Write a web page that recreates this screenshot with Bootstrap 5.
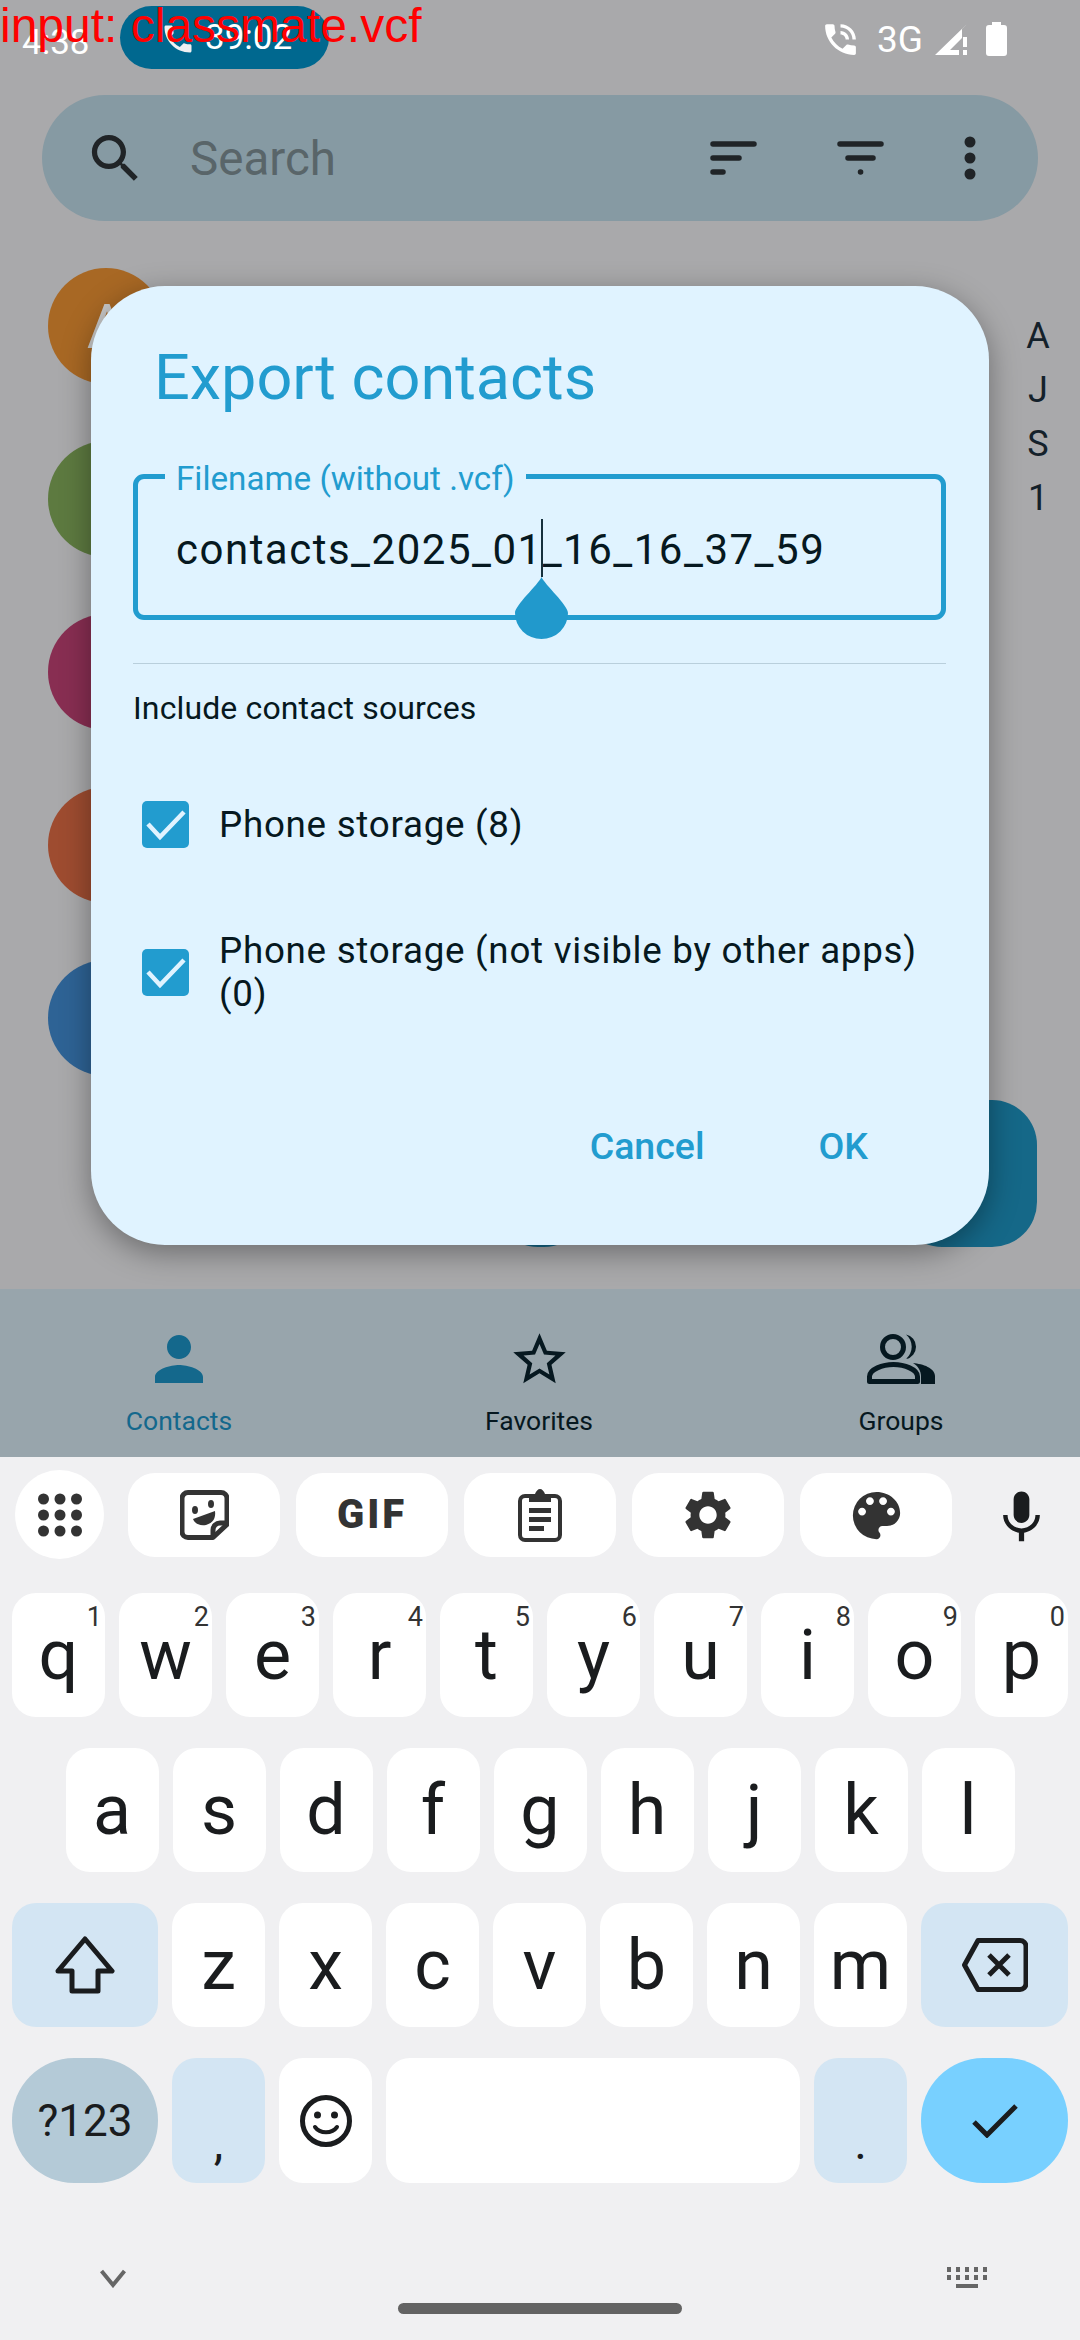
<!DOCTYPE html>
<html lang="en">
<head>
  <meta charset="UTF-8" />
  <meta name="viewport" content="width=device-width, initial-scale=1.0" />
  <title>Export contacts</title>
  <link href="https://cdn.jsdelivr.net/npm/bootstrap@5.3.3/dist/css/bootstrap.min.css" rel="stylesheet">
  <style>
    body {
      margin: 0;
      width: 1080px;
      height: 2340px;
      overflow: hidden;
      font-family: Roboto, "Noto Sans", sans-serif;
      background: #f0f0f2;
    }
    svg { display: block; flex: none; }

    .phone { width: 1080px; height: 2340px; position: relative; }
    .app-area { height: 1457px; background: #a9a9ab; }

    .debug-line {
      position: absolute; left: 0; top: 2px; z-index: 10;
      font: 48px/48px "Liberation Sans", sans-serif; color: #ff0000;
    }
    .status-row { height: 78px; color: #fff; font-size: 35px; padding-left: 22px; }
    .call-pill {
      width: 209px; height: 63px; margin: 6px 0 0 30px; padding: 2px 0 0 40px; gap: 9px;
      background: #00688f; border-radius: 32px;
    }
    .status-time { width: 68px; height: 78px; margin-top: 4px; }
    .status-icons { height: 78px; margin-left: auto; padding-right: 73px; }
    .net-label { font-size: 37px; line-height: 37px; margin: 0 12px 0 16px; }
    .battery-icon { margin-left: 19px; }

    .search-pill {
      height: 126px; margin: 17px 42px 0; background: #869aa3; border-radius: 63px;
      padding-left: 42px; color: #202427;
    }
    .search-text { font-size: 47.5px; line-height: 60px; padding-top: 2px; color: #596569; margin-left: 43px; }
    .search-tools { margin-left: auto; padding-right: 62px; gap: 80px; }

    .contact-area { height: 1068px; }
    .avatar-col { padding: 47px 0 0 48px; gap: 57px; }
    .avatar-dot { width: 116px; height: 116px; color: #c9c9c9; font-size: 62px; padding-left: 2px; }
    .dot-orange { background: #a86824; }
    .dot-green { background: #5d7a40; }
    .dot-plum { background: #882e52; }
    .dot-rust { background: #9e4c30; }
    .dot-blue { background: #2e6395; }
    .index-col { width: 44px; margin-right: 20px; padding-top: 88px; font-size: 36px; line-height: 54px; color: #14212a; }
    .fab-wide { position: absolute; right: 43px; top: 879px; width: 140px; height: 147px; background: #156888; border-radius: 45px; }
    .fab-mid { position: absolute; left: 490px; top: 879px; width: 102px; height: 147px; background: #156888; border-radius: 48px; }

    .bottom-nav { height: 168px; padding-left: 79px; background: #98a5ac; color: #061820; font-size: 26.5px; }
    .nav-cell { width: 200px; height: 168px; }
    .nav-cell + .nav-cell { margin-left: 160px; }
    .nav-cell.nav-last { margin-left: 162px; }
    .nav-slot { height: 114px; }
    .nav-person { margin-top: 34px; }
    .nav-star { margin-top: 39px; }
    .nav-groups { margin-top: 45px; }
    .nav-label { line-height: 36px; }
    .nav-active { color: #14688c; }

    .export-dialog {
      position: absolute; left: 91px; top: 286px; width: 898px; height: 959px; z-index: 5;
      background: #e0f3ff; border: 0; border-radius: 74px;
      padding: 54px 43px 0 42px; color: #061820;
      box-shadow: 0 8px 30px rgba(0, 0, 0, .36);
    }
    .dialog-title { font-size: 63px; line-height: 76px; font-weight: 400; color: #229ccf; margin: 0 0 40px 21px; }
    .name-field { border: 5px solid #229ccf; border-radius: 11px; height: 164px; padding: 0; }
    .name-field legend {
      float: none; width: auto; margin: 0 0 0 27px; padding: 5px 11px 0;
      font-size: 33.2px; line-height: 36px; color: #229ccf;
    }
    .name-input {
      background: transparent; border: 0; padding: 0; margin: 23px 0 0 38px; width: 740px;
      font: 42px/60px Roboto, sans-serif; letter-spacing: 1.5px; color: #061820; outline: 0;
    }
    .text-caret { position: absolute; left: 450px; top: 233px; width: 1.5px; height: 58px; background: #16303c; }
    .text-drop { position: absolute; left: 424px; top: 291px; }
    .field-rule { margin: 43px 0 0; border: 0; border-top: 1.5px solid #b9cfdc; opacity: 1; }
    .sources-label { font-size: 32px; line-height: 44px; letter-spacing: .13px; margin: 22px 0 51px; }
    .source-list { gap: 62px; }
    .source-row { min-height: 86px; margin: 0 0 0 9px; padding: 0; gap: 30px; font-size: 36.75px; line-height: 43px; letter-spacing: .73px; }
    .source-row .form-check-input {
      float: none; flex: none; width: 47px; height: 47px; margin: 0; border: 0; border-radius: 5px;
      background-color: #229ccf; opacity: 1;
    }
    .source-row .form-check-input:checked {
      background-size: 100% 100%;
      background-image: url("data:image/svg+xml,%3csvg xmlns='http://www.w3.org/2000/svg' viewBox='0 0 47 47'%3e%3cpath fill='none' stroke='%23e0f3ff' stroke-width='4.5' d='M6 23l12 13L42 11'/%3e%3c/svg%3e");
    }
    .source-row .form-check-label { opacity: 1; }
    .dialog-actions { margin-top: 109px; padding-right: 78px; gap: 114px; }
    .dialog-btn { padding: 0; border: 0; font-size: 37.5px; line-height: 44px; font-weight: 500; color: #229ccf; text-decoration: none; }

    .keyboard { height: 883px; background: #f0f0f2; }
    .kb-tools { height: 136px; padding: 13px 0 0 15px; color: #333; }
    .apps-round { width: 89px; height: 89px; background: #fff; margin-right: 24px; }
    .tool-key { width: 152px; height: 84px; margin: 3px 16px 0 0; background: #fff; border-radius: 27px; }
    .gif-text { font-size: 40px; line-height: 38px; font-weight: 900; letter-spacing: 3px; color: #333; }
    .mic-slot { margin: 3px 0 0 22px; color: #1a1c1e; }
    .kb-row { height: 124px; margin-bottom: 31px; gap: 14px; }
    .kb-edge { padding: 0 12px; }
    .kb-last { height: 125px; margin-bottom: 0; }
    .kb-key {
      position: relative; width: 93px; height: 100%; padding: 0; border: 0; border-radius: 24px;
      background: #fff; color: #1a1c1e; font-size: 70px; line-height: 1;
    }
    .kb-hint { position: absolute; top: 11px; right: 3px; font-size: 27px; line-height: 27px; color: #333; }
    .kb-wide { width: 146px; }
    .kb-wider { width: 147px; }
    .kb-space { width: 414px; }
    .kb-fn { background: #d3e5f3; }
    .kb-sym { background: #b4cad7; font-size: 44px; border-radius: 62px; }
    .kb-done { background: #78d0ff; border-radius: 62px; }
    .kb-punct { font-size: 48px; padding-top: 44px; }
    .kb-footer { margin-top: 84px; padding: 0 92px 0 100px; height: 21px; color: #666; }
    .home-bar { width: 284px; height: 11px; margin: 15px auto 0; background: #636363; border-radius: 6px; }
  </style>
</head>
<body>
  <div class="phone">
    <div class="debug-line">input: classmate.vcf</div>

    <div class="app-area d-flex flex-column">
      <div class="status-row d-flex align-items-start">
        <div class="status-time d-flex align-items-center">4:38</div>
        <div class="call-pill d-flex align-items-center">
          <svg width="36" height="36" viewBox="0 0 24 24" fill="#f0f0f2"><path d="M6.62 10.79c1.44 2.83 3.76 5.14 6.59 6.59l2.2-2.2c.27-.27.67-.36 1.02-.24 1.12.37 2.33.57 3.57.57.55 0 1 .45 1 1V20c0 .55-.45 1-1 1-9.39 0-17-7.61-17-17 0-.55.45-1 1-1h3.5c.55 0 1 .45 1 1 0 1.25.2 2.45.57 3.57.11.35.03.74-.25 1.02l-2.2 2.2z"/></svg>
          <span>39:02</span>
        </div>
        <div class="status-icons d-flex align-items-center">
          <svg width="41" height="41" viewBox="0 0 24 24" fill="#fff"><path d="M20 15.5c-1.25 0-2.45-.2-3.57-.57-.35-.11-.74-.03-1.02.24l-2.2 2.2c-2.83-1.44-5.15-3.75-6.59-6.58l2.2-2.21c.28-.27.36-.66.25-1.01C8.7 6.45 8.5 5.25 8.5 4c0-.55-.45-1-1-1H4c-.55 0-1 .45-1 1 0 9.39 7.61 17 17 17 .55 0 1-.45 1-1v-3.5c0-.55-.45-1-1-1zM19 12h2c0-4.97-4.03-9-9-9v2c3.87 0 7 3.13 7 7zm-4 0h2c0-2.76-2.24-5-5-5v2c1.66 0 3 1.34 3 3z"/></svg>
          <span class="net-label">3G</span>
          <svg width="32" height="31" viewBox="0 0 32 31" fill="#fff"><path d="M32 0 0 31h24v-5h-9l12-12v-9z"/><path d="M28 13h4v10h-4zM28 26h4v5h-4z"/></svg>
          <svg class="battery-icon" width="21" height="34" viewBox="0 0 21 34" fill="#fff"><path d="M6 0h9v3h3a3 3 0 0 1 3 3v25a3 3 0 0 1-3 3H3a3 3 0 0 1-3-3V6a3 3 0 0 1 3-3h3z"/></svg>
        </div>
      </div>

      <div class="search-pill d-flex align-items-center">
        <svg width="63" height="63" viewBox="0 0 24 24" fill="currentColor"><path d="M15.5 14h-.79l-.28-.27C15.41 12.59 16 11.11 16 9.5 16 5.91 13.09 3 9.5 3S3 5.91 3 9.5 5.91 16 9.5 16c1.61 0 3.09-.59 4.23-1.57l.27.28v.79l5 4.99L20.49 19l-4.99-5zm-6 0C7.01 14 5 11.99 5 9.5S7.01 5 9.5 5 14 7.01 14 9.5 11.99 14 9.5 14z"/></svg>
        <span class="search-text">Search</span>
        <div class="search-tools d-flex align-items-center">
          <svg width="47" height="36" viewBox="0 0 47 36" stroke="currentColor" stroke-width="5.5" stroke-linecap="round"><path d="M3 4h41M3 18h26M3 32h10"/></svg>
          <svg width="47" height="36" viewBox="0 0 47 36" stroke="currentColor" stroke-width="5.5" stroke-linecap="round"><path d="M3 4h41M11 18h25M23.5 32h.1"/></svg>
          <svg width="12" height="44" viewBox="0 0 12 44" fill="currentColor"><circle cx="6" cy="6" r="5.5"/><circle cx="6" cy="22" r="5.5"/><circle cx="6" cy="38" r="5.5"/></svg>
        </div>
      </div>

      <div class="contact-area position-relative d-flex justify-content-between">
        <div class="avatar-col d-flex flex-column">
          <div class="avatar-dot dot-orange rounded-circle d-flex align-items-center justify-content-center">A</div>
          <div class="avatar-dot dot-green rounded-circle"></div>
          <div class="avatar-dot dot-plum rounded-circle"></div>
          <div class="avatar-dot dot-rust rounded-circle"></div>
          <div class="avatar-dot dot-blue rounded-circle"></div>
        </div>
        <div class="index-col text-center">
          <div>A</div><div>J</div><div>S</div><div>1</div>
        </div>
        <div class="fab-mid"></div>
        <div class="fab-wide"></div>
      </div>

      <div class="bottom-nav d-flex">
        <div class="nav-cell nav-active d-flex flex-column align-items-center">
          <div class="nav-slot">
            <svg class="nav-person" width="72" height="72" viewBox="0 0 24 24" fill="currentColor"><path d="M12 12c2.21 0 4-1.79 4-4s-1.79-4-4-4-4 1.79-4 4 1.79 4 4 4zm0 2c-2.67 0-8 1.34-8 4v2h16v-2c0-2.66-5.33-4-8-4z"/></svg>
          </div>
          <div class="nav-label">Contacts</div>
        </div>
        <div class="nav-cell d-flex flex-column align-items-center">
          <div class="nav-slot">
            <svg class="nav-star" width="63" height="63" viewBox="0 0 24 24" fill="currentColor"><path d="M22 9.24l-7.19-.62L12 2 9.19 8.63 2 9.24l5.46 4.73L5.82 21 12 17.27 18.18 21l-1.63-7.03L22 9.24zM12 15.4l-3.76 2.27 1-4.28-3.32-2.88 4.38-.38L12 6.1l1.71 4.04 4.38.38-3.32 2.88 1 4.28L12 15.4z"/></svg>
          </div>
          <div class="nav-label">Favorites</div>
        </div>
        <div class="nav-cell nav-last d-flex flex-column align-items-center">
          <div class="nav-slot">
            <svg class="nav-groups" width="68" height="50" viewBox="0 0 68 50"><circle cx="26" cy="13" r="10.5" fill="none" stroke="currentColor" stroke-width="5"/><path fill="currentColor" d="M39 .5a12.5 12.5 0 0 1 0 24.5 16 16 0 0 0 0-24.5z"/><path fill="none" stroke="currentColor" stroke-width="5" stroke-linejoin="round" d="M2.5 47.5v-5c0-7 13-12 24-12s24 5 24 12v5z"/><path fill="currentColor" d="M46 29c10 1 22 5 22 13v8H54v-8c0-5-3-10-8-13z"/></svg>
          </div>
          <div class="nav-label">Groups</div>
        </div>
      </div>
    </div>

    <div class="card export-dialog">
      <h2 class="dialog-title">Export contacts</h2>
      <fieldset class="name-field">
        <legend>Filename (without .vcf)</legend>
        <input class="name-input" type="text" value="contacts_2025_01_16_16_37_59">
      </fieldset>
      <div class="text-caret"></div>
      <svg class="text-drop" width="53" height="62" viewBox="0 0 53 62" fill="#2199cc"><path d="M26.5 0C30 8 53 28 53 36a26.5 26 0 0 1-53 0C0 28 23 8 26.5 0z"/></svg>
      <hr class="field-rule">
      <div class="sources-label">Include contact sources</div>
      <div class="source-list d-flex flex-column">
        <div class="form-check source-row d-flex align-items-center">
          <input class="form-check-input" type="checkbox" id="srcPhone" checked>
          <label class="form-check-label" for="srcPhone">Phone storage (8)</label>
        </div>
        <div class="form-check source-row d-flex align-items-center">
          <input class="form-check-input" type="checkbox" id="srcLocal" checked>
          <label class="form-check-label" for="srcLocal">Phone storage (not visible by other apps) (0)</label>
        </div>
      </div>
      <div class="dialog-actions d-flex justify-content-end">
        <button class="btn btn-link dialog-btn" type="button">Cancel</button>
        <button class="btn btn-link dialog-btn" type="button">OK</button>
      </div>
    </div>

    <div class="keyboard">
      <div class="kb-tools d-flex align-items-start">
        <div class="apps-round rounded-circle d-flex align-items-center justify-content-center">
          <svg width="44" height="44" viewBox="0 0 44 44" fill="currentColor"><circle cx="5.5" cy="6" r="5.5"/><circle cx="22" cy="6" r="5.5"/><circle cx="38.5" cy="6" r="5.5"/><circle cx="5.5" cy="22" r="5.5"/><circle cx="22" cy="22" r="5.5"/><circle cx="38.5" cy="22" r="5.5"/><circle cx="5.5" cy="38" r="5.5"/><circle cx="22" cy="38" r="5.5"/><circle cx="38.5" cy="38" r="5.5"/></svg>
        </div>
        <div class="tool-key d-flex align-items-center justify-content-center">
          <svg width="49" height="50" viewBox="0 0 49 50"><path fill="none" stroke="currentColor" stroke-width="5" stroke-linejoin="round" d="M8 2.5h33a6 6 0 0 1 6 6v26L33 47.5H8a6 6 0 0 1-6-6V8.5a6 6 0 0 1 6-6z"/><path fill="none" stroke="currentColor" stroke-width="5" d="M47 33h-7a7 7 0 0 0-7 7v7"/><ellipse cx="15" cy="20" rx="3" ry="4" fill="currentColor"/><ellipse cx="31" cy="14" rx="3" ry="4" fill="currentColor"/><path fill="currentColor" d="M13 29 35 21c1 7-2 12-9 14-6 1-11-1-13-6z"/></svg>
        </div>
        <div class="tool-key d-flex align-items-center justify-content-center"><span class="gif-text">GIF</span></div>
        <div class="tool-key d-flex align-items-center justify-content-center">
          <svg width="44" height="53" viewBox="0 0 44 53"><rect x="2" y="7" width="40" height="44" rx="5" fill="none" stroke="currentColor" stroke-width="4"/><path fill="currentColor" d="M11 5h6c1-3 3-5 5-5s4 2 5 5h6v8H11z"/><path fill="currentColor" d="M11 19h22v5H11zM11 28h22v5H11zM11 37h15v5H11z"/></svg>
        </div>
        <div class="tool-key d-flex align-items-center justify-content-center">
          <svg width="58" height="58" viewBox="0 0 24 24" fill="currentColor"><path d="M19.14 12.94c.04-.3.06-.61.06-.94 0-.32-.02-.64-.07-.94l2.03-1.58c.18-.14.23-.41.12-.61l-1.92-3.32c-.12-.22-.37-.29-.59-.22l-2.39.96c-.5-.38-1.03-.7-1.62-.94l-.36-2.54c-.04-.24-.24-.41-.48-.41h-3.84c-.24 0-.43.17-.47.41l-.36 2.54c-.59.24-1.13.57-1.62.94l-2.39-.96c-.22-.08-.47 0-.59.22L2.74 8.87c-.12.21-.08.47.12.61l2.03 1.58c-.05.3-.09.63-.09.94s.02.64.07.94l-2.03 1.58c-.18.14-.23.41-.12.61l1.92 3.32c.12.22.37.29.59.22l2.39-.96c.5.38 1.03.7 1.62.94l.36 2.54c.05.24.24.41.48.41h3.84c.24 0 .44-.17.47-.41l.36-2.54c.59-.24 1.13-.56 1.62-.94l2.39.96c.22.08.47 0 .59-.22l1.92-3.32c.12-.22.07-.47-.12-.61l-2.01-1.58zM12 15.6c-1.98 0-3.6-1.62-3.6-3.6s1.62-3.6 3.6-3.6 3.6 1.62 3.6 3.6-1.62 3.6-3.6 3.6z"/></svg>
        </div>
        <div class="tool-key d-flex align-items-center justify-content-center">
          <svg width="63" height="63" viewBox="0 0 24 24" fill="currentColor"><path d="M12 3a9 9 0 0 0 0 18c.83 0 1.5-.67 1.5-1.5 0-.39-.15-.74-.39-1.01-.23-.26-.38-.61-.38-.99 0-.83.67-1.5 1.5-1.5H16c2.76 0 5-2.24 5-5 0-4.42-4.03-8-9-8zm-5.5 9c-.83 0-1.5-.67-1.5-1.5S5.67 9 6.5 9 8 9.67 8 10.5 7.33 12 6.5 12zm3-4C8.67 8 8 7.33 8 6.5S8.67 5 9.5 5s1.5.67 1.5 1.5S10.33 8 9.5 8zm5 0c-.83 0-1.5-.67-1.5-1.5S13.67 5 14.5 5s1.5.67 1.5 1.5S15.33 8 14.5 8zm3 4c-.83 0-1.5-.67-1.5-1.5S16.67 9 17.5 9s1.5.67 1.5 1.5-.67 1.5-1.5 1.5z"/></svg>
        </div>
        <div class="mic-slot">
          <svg width="63" height="84" viewBox="0 0 24 32" fill="currentColor"><path d="M12 19c1.66 0 2.99-1.34 2.99-3L15 10c0-1.66-1.34-3-3-3S9 8.34 9 10v6c0 1.66 1.34 3 3 3zm5.3-3c0 3-2.54 5.1-5.3 5.1S6.7 19 6.7 16H5c0 3.41 2.72 6.23 6 6.72V26h2v-3.28c3.28-.48 6-3.3 6-6.72h-1.7z"/></svg>
        </div>
      </div>

      <div class="kb-row d-flex justify-content-center" id="rowTop"></div>
      <div class="kb-row d-flex justify-content-center" id="rowHome"></div>
      <div class="kb-row kb-edge d-flex">
        <button class="btn kb-key kb-wide kb-fn d-flex align-items-center justify-content-center" type="button">
          <svg width="60" height="58" viewBox="0 0 60 58"><path fill="none" stroke="#1a1c1e" stroke-width="5" stroke-linejoin="round" d="M30 3 57 35H43v20H17V35H3z"/></svg>
        </button>
        <button class="btn kb-key" type="button">z</button>
        <button class="btn kb-key" type="button">x</button>
        <button class="btn kb-key" type="button">c</button>
        <button class="btn kb-key" type="button">v</button>
        <button class="btn kb-key" type="button">b</button>
        <button class="btn kb-key" type="button">n</button>
        <button class="btn kb-key" type="button">m</button>
        <button class="btn kb-key kb-wider kb-fn d-flex align-items-center justify-content-center" type="button">
          <svg width="66" height="54" viewBox="0 0 66 54" fill="none" stroke="#1a1c1e" stroke-width="5" stroke-linejoin="round"><path d="M16 2.5h42a6 6 0 0 1 6 6v37a6 6 0 0 1-6 6H16L2.5 27z"/><path d="M27 17 47 37M47 17 27 37"/></svg>
        </button>
      </div>
      <div class="kb-row kb-edge kb-last d-flex">
        <button class="btn kb-key kb-wide kb-sym" type="button">?123</button>
        <button class="btn kb-key kb-fn kb-punct" type="button">,</button>
        <button class="btn kb-key d-flex align-items-center justify-content-center" type="button">
          <svg width="52" height="54" viewBox="0 0 52 54"><circle cx="26" cy="27" r="23.5" fill="none" stroke="#1a1c1e" stroke-width="5"/><circle cx="17.5" cy="21" r="3.5" fill="#1a1c1e"/><circle cx="34.5" cy="21" r="3.5" fill="#1a1c1e"/><path d="M15 33c5 7 17 7 22 0" fill="none" stroke="#1a1c1e" stroke-width="4" stroke-linecap="round"/></svg>
        </button>
        <button class="btn kb-key kb-space" type="button"></button>
        <button class="btn kb-key kb-fn kb-punct" type="button">.</button>
        <button class="btn kb-key kb-wider kb-done d-flex align-items-center justify-content-center" type="button">
          <svg width="46" height="34" viewBox="0 0 46 34" fill="none" stroke="#1a1c1e" stroke-width="5"><path d="M2 18 15 31 44 2"/></svg>
        </button>
      </div>
      <div class="kb-footer d-flex justify-content-between">
        <svg width="26" height="21" viewBox="0 0 26 21" fill="none" stroke="currentColor" stroke-width="4"><path d="M1.5 4 13 18 24.5 4"/></svg>
        <svg width="41" height="21" viewBox="0 0 41 21" fill="currentColor"><path d="M0 0h4v5H0zM9 0h4v5H9zM18 0h4v5h-4zM27 0h4v5h-4zM36 0h4v5h-4zM0 8h4v5H0zM9 8h4v5H9zM18 8h4v5h-4zM27 8h4v5h-4zM36 8h4v5h-4zM9 17h22v4H9z"/></svg>
      </div>
      <div class="home-bar"></div>
    </div>
  </div>
  <script>
    // letter rows come from data, the hints only exist on the top row
    function fillRow(id, letters, hints) {
      const row = document.getElementById(id);
      letters.split('').forEach((ch, i) => {
        const key = document.createElement('button');
        key.className = 'btn kb-key';
        key.type = 'button';
        key.textContent = ch;
        if (hints) {
          const hint = document.createElement('span');
          hint.className = 'kb-hint';
          hint.textContent = hints[i];
          key.appendChild(hint);
        }
        row.appendChild(key);
      });
    }
    fillRow('rowTop', 'qwertyuiop', '1234567890');
    fillRow('rowHome', 'asdfghjkl');
  </script>
  <script src="https://cdn.jsdelivr.net/npm/bootstrap@5.3.3/dist/js/bootstrap.bundle.min.js"></script>
</body>
</html>
